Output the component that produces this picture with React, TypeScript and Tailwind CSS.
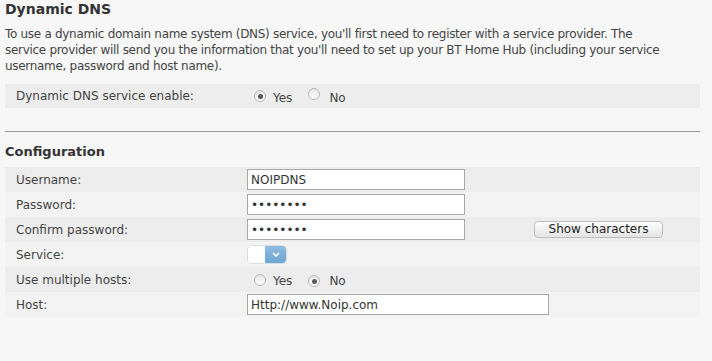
import React from "react";

const font = { fontFamily: '"DejaVu Sans", Verdana, sans-serif' };

function Radio({ checked }: { checked?: boolean }) {
  return (
    <span className="inline-flex h-[12px] w-[12px] items-center justify-center rounded-full border border-[#b8b8b8] bg-gradient-to-b from-[#e6e6e6] to-[#ffffff]">
      {checked && <span className="h-[5px] w-[5px] rounded-full bg-[#5a5a5a]" />}
    </span>
  );
}

function YesNo({ yes }: { yes: boolean }) {
  return (
    <div className="flex items-center pl-[7px]">
      <Radio checked={yes} />
      <span className="ml-[7px] mt-[3px]">Yes</span>
      <span className="ml-[16px]">
        <Radio checked={!yes} />
      </span>
      <span className="ml-[9px] mt-[3px]">No</span>
    </div>
  );
}

function TextBox({ value, w, password }: { value: string; w: string; password?: boolean }) {
  return (
    <div className={`flex h-[21px] items-center border border-[#a9a9a9] bg-white pl-[3px] ${w}`}>
      {password ? (
        <span className="text-[12px] text-[#333]">{"••••••••"}</span>
      ) : (
        <span className="text-[#333]">{value}</span>
      )}
    </div>
  );
}

function Row({ label, dark, children }: { label: string; dark?: boolean; children: React.ReactNode }) {
  return (
    <div className={`flex h-[25px] items-center ${dark ? "bg-[#ededed]" : "bg-[#f3f3f3]"}`}>
      <div className="w-[242px] pl-[11px]">{label}</div>
      {children}
    </div>
  );
}

export default function App() {
  return (
    <div className="h-[361px] w-[712px] overflow-hidden bg-[#f7f7f7] text-[12px] text-[#444]" style={font}>
      <div className="px-[5px]">
        <h1 className="pt-[1px] text-[14px] font-bold leading-[16px] text-[#333]">Dynamic DNS</h1>
        <p className="mt-[9px] w-[700px] whitespace-nowrap leading-[16px] tracking-[-0.3px]">
          To use a dynamic domain name system (DNS) service, you'll first need to register with a service provider. The
          <br />
          service provider will send you the information that you'll need to set up your BT Home Hub (including your service
          <br />
          username, password and host name).
        </p>
        <div className="mt-[10px] flex h-[24px] w-[695px] items-center bg-[#ededed]">
          <div className="w-[242px] pl-[11px]">Dynamic DNS service enable:</div>
          <YesNo yes />
        </div>
        <div className="mt-[23px] h-px w-[695px] bg-[#9a9a9a]" />
        <h2 className="mt-[12px] text-[13px] font-bold leading-[16px] text-[#333]">Configuration</h2>
        <div className="mt-[7px] w-[695px]">
          <Row label="Username:" dark>
            <TextBox value="NOIPDNS" w="w-[218px]" />
          </Row>
          <Row label="Password:">
            <TextBox value="" password w="w-[218px]" />
          </Row>
          <Row label="Confirm password:" dark>
            <TextBox value="" password w="w-[218px]" />
            <button className="ml-[69px] h-[17px] w-[129px] rounded-[4px] border border-[#bdbdbd] bg-gradient-to-b from-[#ffffff] to-[#e4e4e4] text-[12px] leading-[15px] text-[#222]">
              Show characters
            </button>
          </Row>
          <Row label="Service:">
            <div className="flex h-[19px] w-[40px] overflow-hidden rounded-[5px] border border-[#d5dde5]">
              <div className="w-[17px] bg-white" />
              <div className="flex flex-1 items-center justify-center bg-gradient-to-b from-[#8fbde2] to-[#6fa5d1]">
                <svg width="8" height="5" viewBox="0 0 8 5">
                  <path d="M1 1 L4 4 L7 1" fill="none" stroke="#fff" strokeWidth="1.5" />
                </svg>
              </div>
            </div>
          </Row>
          <Row label="Use multiple hosts:" dark>
            <YesNo yes={false} />
          </Row>
          <Row label="Host:">
            <TextBox value="Http://www.Noip.com" w="w-[302px]" />
          </Row>
        </div>
      </div>
    </div>
  );
}
